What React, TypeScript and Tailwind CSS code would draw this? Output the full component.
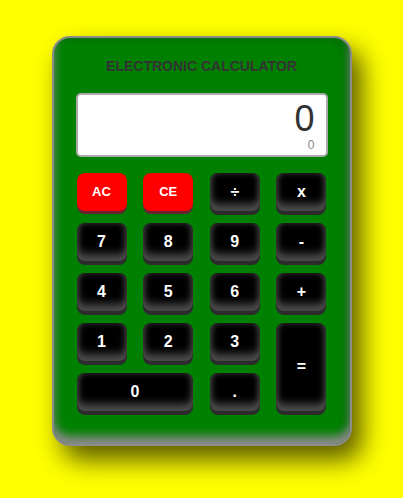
import React from "react";

const blackBtn =
  "rounded-[8px] bg-black text-white font-bold text-[16px] flex items-center justify-center shadow-[0_4px_0_#2c2c2c,inset_0_-7px_8px_#4c4c4c,inset_0_0_6px_#3a3a3a]";
const redBtn =
  "rounded-[8px] bg-[#ff0000] text-white font-bold text-[13px] flex items-center justify-center shadow-[0_3px_0_#6a2232]";

export default function App() {
  return (
    <div
      className="w-[403px] h-[498px] bg-[#ffff00] flex justify-center pt-[36px]"
      style={{ fontFamily: '"Liberation Sans", Arial, sans-serif' }}
    >
      <div className="w-[300px] h-[410px] rounded-[18px] border-2 border-[#8c8c8c] bg-[#008000] px-[22px] pt-[20px] shadow-[10px_14px_26px_rgba(0,0,0,0.65),inset_0_-8px_10px_#8a8a8a,inset_-5px_0_10px_rgba(0,0,0,0.2)]">
        <div className="text-center text-[14px] leading-[16px] font-bold text-[#333333]">
          ELECTRONIC CALCULATOR
        </div>
        <div className="mt-[19px] h-[64px] rounded-[5px] border-2 border-[#aaaaaa] bg-white pr-[11px] pt-[6px] text-right">
          <div className="text-[36px] leading-[36px] text-[#333333]">0</div>
          <div className="mt-[2px] text-[12px] leading-[12px] text-[#888888]">0</div>
        </div>
        <div className="mt-[16px] mx-[1px] grid grid-cols-[repeat(4,50px)] grid-rows-[repeat(5,38px)] justify-between gap-y-[12px]">
          <button className={redBtn}>AC</button>
          <button className={redBtn}>CE</button>
          <button className={blackBtn}>÷</button>
          <button className={blackBtn}>x</button>
          <button className={blackBtn}>7</button>
          <button className={blackBtn}>8</button>
          <button className={blackBtn}>9</button>
          <button className={blackBtn}>-</button>
          <button className={blackBtn}>4</button>
          <button className={blackBtn}>5</button>
          <button className={blackBtn}>6</button>
          <button className={blackBtn}>+</button>
          <button className={blackBtn}>1</button>
          <button className={blackBtn}>2</button>
          <button className={blackBtn}>3</button>
          <button className={`${blackBtn} row-span-2`}>=</button>
          <button className={`${blackBtn} col-span-2`}>0</button>
          <button className={blackBtn}>.</button>
        </div>
      </div>
    </div>
  );
}
